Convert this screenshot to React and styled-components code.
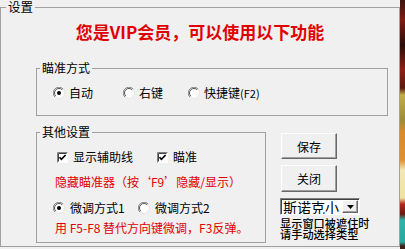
import React from 'react';
import styled, { createGlobalStyle } from 'styled-components';

const Global = createGlobalStyle`
  html, body { margin: 0; padding: 0; background: #f0f0f0; }
  body {
    font-family: "Noto Sans CJK SC", "Noto Sans", sans-serif;
    font-size: 12px;
    color: #000;
  }
  * { box-sizing: border-box; }
`;

const Page = styled.div`
  width: 405px;
  height: 249px;
  display: flex;
  overflow: hidden;
  background: #f0f0f0;
`;

const Window = styled.div`
  width: 400px;
  height: 249px;
  flex: none;
`;

const Strip = styled.div`
  width: 5px;
  height: 249px;
  flex: none;
  background: linear-gradient(
    to bottom,
    #3a1410 0px, #7d1c14 20px, #2a0e0a 45px, #8e2016 70px, #5a1a10 88px,
    #c2ad4a 95px, #9c8c38 120px, #d98b2c 132px, #e09030 160px,
    #f2e8b6 170px, #efe2a0 198px, #b42a1e 204px, #6a1810 214px,
    #2fb3a8 220px, #28a89e 242px, #402018 246px
  );
`;

const Group = styled.fieldset`
  margin: 0;
  padding: 0;
  min-width: 0;
  border: 1px solid #a0a0a0;
  width: ${p => p.$w}px;
  height: ${p => p.$h}px;
  flex: none;
`;

const Legend = styled.legend`
  margin-left: ${p => p.$ml}px;
  padding: 0 2px;
  font-size: ${p => p.$fs}px;
  line-height: ${p => p.$lh}px;
  height: ${p => p.$lh}px;
`;

const Title = styled.div`
  margin-top: 8px;
  text-align: center;
  font-size: 17px;
  line-height: 20px;
  font-weight: 700;
  color: #e00000;
`;

const AimGroup = styled(Group)`
  margin: 20px 0 0 35px;
`;

const OptionRow = styled.div`
  display: grid;
  grid-template-columns: ${p => p.$cols};
  margin-top: ${p => p.$mt}px;
  padding-left: ${p => p.$pl}px;
  height: 14px;
  align-items: center;
`;

const Option = styled.label`
  display: flex;
  align-items: center;
  gap: ${p => p.$gap}px;
  font-size: 12px;
  line-height: 14px;
  white-space: nowrap;
`;

const Small = styled.span`
  font-size: 11px;
`;

const Bottom = styled.div`
  display: flex;
  align-items: flex-start;
  margin-top: 10px;
  padding-left: 35px;
`;

const RedNote = styled.div`
  margin-top: ${p => p.$mt}px;
  padding-left: 18px;
  color: #e00000;
  font-size: 12px;
  line-height: 14px;
  white-space: nowrap;
`;

const Side = styled.div`
  display: flex;
  flex-direction: column;
  align-items: flex-start;
  flex: none;
  width: 96px;
  margin-left: 14px;
  padding-top: 7px;
`;

const Button = styled.button`
  flex: none;
  width: 56px;
  height: ${p => p.$h}px;
  margin: ${p => p.$mt}px 0 0 1px;
  padding: 0;
  background: #f0f0f0;
  font-family: "Noto Sans CJK SC", sans-serif;
  font-size: 12px;
  color: #000;
  border: 1px solid;
  border-color: #ffffff #696969 #696969 #ffffff;
  box-shadow: inset -1px -1px 0 #a0a0a0;
`;

const Combo = styled.div`
  flex: none;
  margin-top: 6px;
  width: 80px;
  height: 17px;
  display: flex;
  align-items: center;
  justify-content: space-between;
  background: #fff;
  border: 1px solid;
  border-color: #808080 #ffffff #ffffff #808080;
  box-shadow: inset 1px 1px 0 #404040;
  padding: 1px 1px 1px 2px;
  overflow: hidden;
`;

const ComboText = styled.span`
  flex: none;
  font-size: 14px;
  line-height: 14px;
  white-space: nowrap;
`;

const DropButton = styled.span`
  flex: none;
  width: 16px;
  height: 13px;
  display: flex;
  align-items: center;
  justify-content: center;
  background: #f0f0f0;
  border: 1px solid;
  border-color: #ffffff #696969 #696969 #ffffff;
  box-shadow: inset -1px -1px 0 #a0a0a0;
`;

const Hint = styled.div`
  margin-top: 3px;
  font-size: 11.2px;
  line-height: 11px;
  white-space: nowrap;
  font-weight: 500;
`;

const RadioMark = ({ checked }) => (
  <svg width="12" height="12" viewBox="0 0 12 12">
    <circle cx="6" cy="6" r="5.5" fill="#fff" stroke="#e3e3e3" />
    <path d="M1.9 10.1 A5.5 5.5 0 0 1 10.1 1.9" fill="none" stroke="#8a8a8a" />
    <path d="M2.8 9.2 A4.5 4.5 0 0 1 9.2 2.8" fill="none" stroke="#505050" />
    {checked && <circle cx="6" cy="6" r="2" fill="#000" />}
  </svg>
);

const CheckMark = () => (
  <svg width="11" height="11" viewBox="0 0 11 11">
    <rect x="0" y="0" width="11" height="11" fill="#fff" />
    <path d="M0.5 10.5 V0.5 H10.5" fill="none" stroke="#808080" />
    <path d="M1.5 9.5 V1.5 H9.5" fill="none" stroke="#404040" />
    <path d="M2.5 5.2 L4.4 7.3 L8.6 3" fill="none" stroke="#000" strokeWidth="1.7" />
  </svg>
);

const Arrow = () => (
  <svg width="7" height="4" viewBox="0 0 7 4">
    <path d="M0 0 H7 L3.5 4 Z" fill="#000" />
  </svg>
);

export default function App() {
  return (
    <>
      <Global />
      <Page>
        <Window>
          <Group $w={400} $h={247}>
            <Legend $ml={5} $fs={12.5} $lh={14}>设置</Legend>
            <Title>您是VIP会员，可以使用以下功能</Title>
            <AimGroup $w={352} $h={54}>
              <Legend $ml={3} $fs={12} $lh={12}>瞄准方式</Legend>
              <OptionRow $cols="70px 65px auto" $mt={12} $pl={16}>
                <Option $gap={4}><RadioMark checked /><span>自动</span></Option>
                <Option $gap={4}><RadioMark /><span>右键</span></Option>
                <Option $gap={4}><RadioMark /><span>快捷键<Small>(F2)</Small></span></Option>
              </OptionRow>
            </AimGroup>
            <Bottom>
              <Group $w={230} $h={117}>
                <Legend $ml={3} $fs={12} $lh={12}>其他设置</Legend>
                <OptionRow $cols="100px auto" $mt={12} $pl={20}>
                  <Option $gap={5}><CheckMark /><span>显示辅助线</span></Option>
                  <Option $gap={5}><CheckMark /><span>瞄准</span></Option>
                </OptionRow>
                <RedNote $mt={11}>隐藏瞄准器（按‘F9’隐藏/显示）</RedNote>
                <OptionRow $cols="85px auto" $mt={12} $pl={16}>
                  <Option $gap={5}><RadioMark checked /><span>微调方式1</span></Option>
                  <Option $gap={5}><RadioMark /><span>微调方式2</span></Option>
                </OptionRow>
                <RedNote $mt={6}>用 F5-F8 替代方向键微调，F3反弹。</RedNote>
              </Group>
              <Side>
                <Button $h={26} $mt={0}>保存</Button>
                <Button $h={27} $mt={6}>关闭</Button>
                <Combo>
                  <ComboText>斯诺克小</ComboText>
                  <DropButton><Arrow /></DropButton>
                </Combo>
                <Hint>显示窗口被遮住时<br />请手动选择类型</Hint>
              </Side>
            </Bottom>
          </Group>
        </Window>
        <Strip />
      </Page>
    </>
  );
}
